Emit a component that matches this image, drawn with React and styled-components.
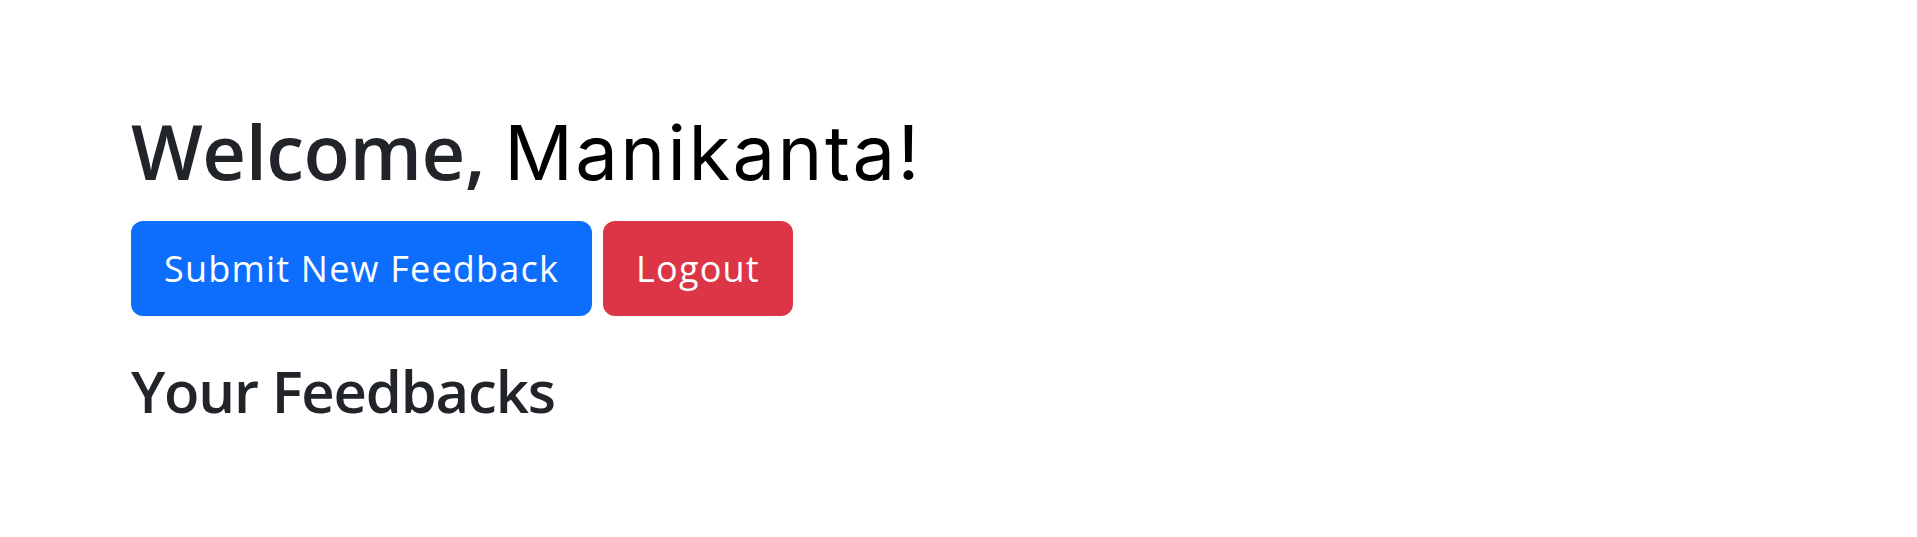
import React from 'react'
import styled, { createGlobalStyle } from 'styled-components'

const GlobalStyle = createGlobalStyle`
  body {
    margin: 0;
    background: #fff;
    font-family: "Open Sans", "Noto Sans", sans-serif;
    color: #212529;
  }
`

const Page = styled.div`
  padding: 104px 0 0 131px;
`

const Title = styled.h1`
  margin: 0;
  font-size: 76px;
  font-weight: 600;
  line-height: 94px;
  letter-spacing: -0.5px;
  color: #212529;
  white-space: nowrap;
`

const Name = styled.span`
  font-family: "Inter", "Noto Sans", sans-serif;
  font-weight: 400;
  color: #000;
  letter-spacing: 2.4px;
`

const Actions = styled.div`
  display: flex;
  gap: 11px;
  margin-top: 22px;
`

const Button = styled.button`
  height: 95px;
  padding: 0 33px;
  border: none;
  border-radius: 12px;
  font-family: "Open Sans", "Noto Sans", sans-serif;
  font-size: 36px;
  letter-spacing: 1.2px;
  color: #fff;
  background: ${p => (p.$variant === 'danger' ? '#dc3545' : '#0d6efd')};
  cursor: pointer;
`

const Subtitle = styled.h2`
  margin: 40px 0 0;
  font-size: 58px;
  font-weight: 600;
  line-height: 70px;
  letter-spacing: -1.2px;
  color: #212529;
`

export default function App() {
  return (
    <>
      <GlobalStyle />
      <Page>
        <Title>
          Welcome, <Name>Manikanta!</Name>
        </Title>
        <Actions>
          <Button>Submit New Feedback</Button>
          <Button $variant="danger">Logout</Button>
        </Actions>
        <Subtitle>Your Feedbacks</Subtitle>
      </Page>
    </>
  )
}
